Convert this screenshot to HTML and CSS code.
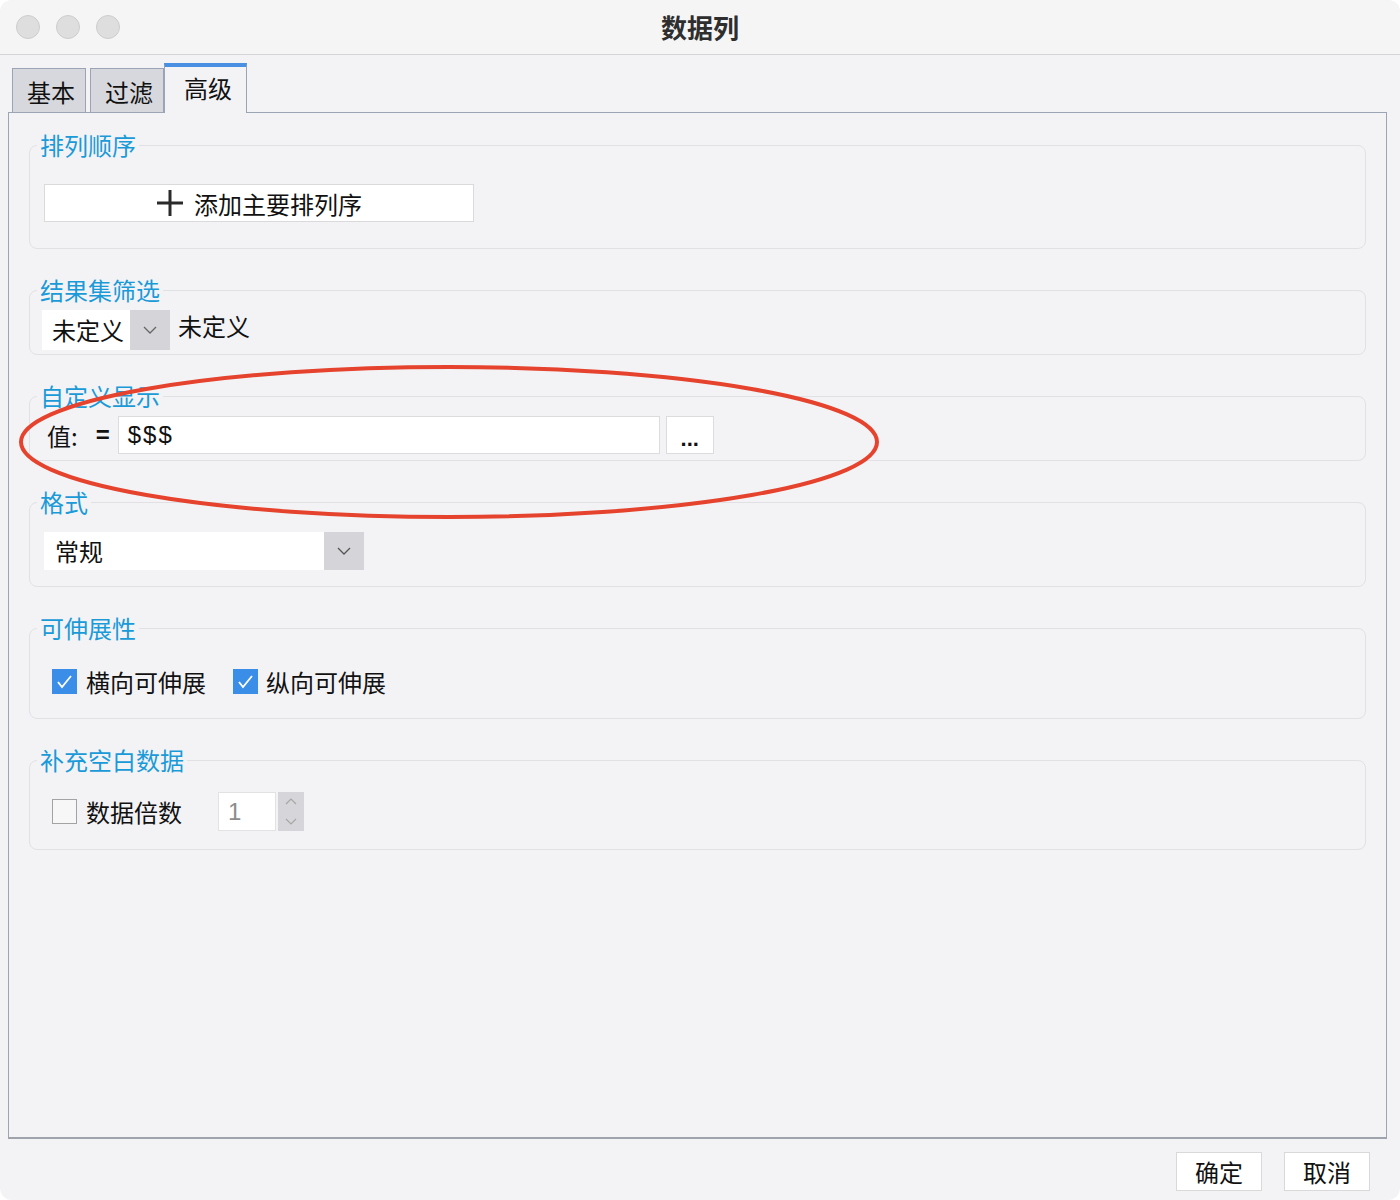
FILE: index.html
```html
<!DOCTYPE html>
<html lang="zh-CN">
<head>
    <meta charset="UTF-8">
    <title>数据列</title>
    <link rel="stylesheet" href="styles.css">
</head>
<body>
    <div class="window">
        <!-- 标题栏 -->
        <div class="titlebar">
            <div class="lights">
                <span class="light"></span>
                <span class="light"></span>
                <span class="light"></span>
            </div>
            <div class="title">数据列</div>
            <div></div>
        </div>

        <!-- 标签页 -->
        <div class="tabs">
            <div class="tab">基本</div>
            <div class="tab">过滤</div>
            <div class="tab active">高级</div>
        </div>

        <div class="panel">
            <fieldset class="group g-sort">
                <legend>排列顺序</legend>
                <button class="add-btn">
                    <svg width="28" height="28" viewBox="0 0 28 28"><path d="M14 1v26M1 14h26" stroke="#2a2a2a" stroke-width="3"/></svg>
                    添加主要排列序
                </button>
            </fieldset>

            <fieldset class="group g-filter">
                <legend>结果集筛选</legend>
                <div class="row top">
                    <div class="combo">
                        <span class="combo-text">未定义</span>
                        <span class="combo-arrow">
                            <svg width="14" height="8" viewBox="0 0 14 8"><path d="M1 1l6 6 6-6" fill="none" stroke="#666" stroke-width="1.3"/></svg>
                        </span>
                    </div>
                    <span class="after-combo">未定义</span>
                </div>
            </fieldset>

            <fieldset class="group g-custom">
                <legend>自定义显示</legend>
                <div class="row">
                    <span class="v-label">值:</span>
                    <span class="eq">=</span>
                    <div class="value-input">$$$</div>
                    <button class="dots-btn">...</button>
                </div>
            </fieldset>

            <fieldset class="group g-format">
                <legend>格式</legend>
                <div class="select">
                    <span class="select-text">常规</span>
                    <span class="combo-arrow">
                        <svg width="14" height="8" viewBox="0 0 14 8"><path d="M1 1l6 6 6-6" fill="none" stroke="#555" stroke-width="1.3"/></svg>
                    </span>
                </div>
            </fieldset>

            <fieldset class="group g-grow">
                <legend>可伸展性</legend>
                <div class="row checks">
                    <span class="cb checked">
                        <svg width="25" height="25" viewBox="0 0 25 25"><path d="M6 13l4 5 9-11" fill="none" stroke="#fff" stroke-width="1.8"/></svg>
                    </span>
                    <span class="cb-label">横向可伸展</span>
                    <span class="cb checked second">
                        <svg width="25" height="25" viewBox="0 0 25 25"><path d="M6 13l4 5 9-11" fill="none" stroke="#fff" stroke-width="1.8"/></svg>
                    </span>
                    <span class="cb-label second">纵向可伸展</span>
                </div>
            </fieldset>

            <fieldset class="group g-fill">
                <legend>补充空白数据</legend>
                <div class="row">
                    <span class="cb empty"></span>
                    <span class="cb-label fill">数据倍数</span>
                    <div class="spin-input">1</div>
                    <div class="spin-btns">
                        <svg width="12" height="7" viewBox="0 0 12 7"><path d="M1 6l5-5 5 5" fill="none" stroke="#a6a6a6" stroke-width="1.2"/></svg>
                        <svg width="12" height="7" viewBox="0 0 12 7"><path d="M1 1l5 5 5-5" fill="none" stroke="#a6a6a6" stroke-width="1.2"/></svg>
                    </div>
                </div>
            </fieldset>
        </div>

        <div class="footer">
            <button class="btn">确定</button>
            <button class="btn">取消</button>
        </div>

        <!-- 红色圈注 -->
        <svg class="mark" width="1400" height="1200" viewBox="0 0 1400 1200">
            <ellipse cx="449" cy="442" rx="428" ry="75" fill="none" stroke="#e5432d" stroke-width="4"/>
        </svg>
    </div>
</body>
</html>
```

FILE: styles.css
```css
body {
    margin: 0;
    background: #fff;
    font-family: "Noto Sans CJK SC", "Liberation Sans", sans-serif;
    color: #111;
}
.window {
    position: relative;
    width: 1400px;
    height: 1200px;
    border-radius: 12px;
    overflow: hidden;
    background: #f3f3f6;
    display: flex;
    flex-direction: column;
}

/* 标题栏 */
.titlebar {
    height: 55px;
    box-sizing: border-box;
    background: #f5f5f6;
    border-bottom: 1px solid #d4d4d6;
    display: grid;
    grid-template-columns: 1fr auto 1fr;
    align-items: center;
}
.lights {
    display: flex;
    gap: 16px;
    padding-left: 16px;
}
.light {
    width: 22px;
    height: 22px;
    border-radius: 50%;
    background: #dedede;
    border: 1px solid #cdcdcd;
}
.title {
    font-size: 26px;
    font-weight: bold;
    color: #2e2e2e;
    line-height: 30px;
}

/* 标签页 */
.tabs {
    display: flex;
    align-items: flex-end;
    padding: 8px 0 0 12px;
}
.tab {
    width: 74px;
    height: 44px;
    box-sizing: border-box;
    background: #d7d8dd;
    border: 1px solid #9aa4b4;
    border-bottom: none;
    font-size: 24px;
    line-height: 30px;
    padding: 8px 0 0 4px;
    text-align: center;
}
.tab + .tab {
    margin-left: 4px;
}
.tab.active {
    position: relative;
    z-index: 1;
    width: 83px;
    height: 50px;
    margin-left: 0;
    margin-bottom: -1px;
    background: #f3f3f6;
    border-top: 4px solid #4a90e2;
    padding: 6px 0 0 5px;
}

/* 面板 */
.panel {
    height: 1027px;
    box-sizing: border-box;
    margin: 0 13px 0 8px;
    border: 1px solid #9ca5b4;
    border-bottom: 2px solid #9ea3ac;
    padding: 17px 20px 0;
}
.group {
    margin: 0 0 26px;
    padding: 0 14px;
    min-width: 0;
    border: 1px solid #e1e1e5;
    border-radius: 8px;
}
.group legend {
    font-size: 24px;
    line-height: 30px;
    color: #1b9ad8;
    padding: 0 3px;
    margin-left: -7px;
}
.g-sort { padding-top: 24px; padding-bottom: 26px; }
.g-filter { padding-top: 5px; padding-bottom: 4px; }
.g-custom { padding-top: 5px; padding-bottom: 6px; }
.g-format { padding-top: 15px; padding-bottom: 16px; }
.g-grow { padding-top: 19px; padding-bottom: 18px; }
.g-fill { padding-top: 17px; padding-bottom: 18px; }

.row {
    display: flex;
    align-items: center;
    font-size: 24px;
}
.row.top {
    align-items: flex-start;
}

.add-btn {
    width: 430px;
    height: 38px;
    padding: 0;
    background: #fff;
    border: 1px solid #dadadd;
    font-family: inherit;
    font-size: 24px;
    color: #111;
    display: flex;
    align-items: center;
    justify-content: center;
    gap: 10px;
}

.combo, .select {
    display: flex;
    background: #fff;
    font-size: 24px;
}
.combo {
    height: 40px;
    margin-left: -2px;
    line-height: 40px;
}
.combo-text {
    width: 88px;
    box-sizing: border-box;
    padding-left: 10px;
}
.combo-arrow {
    width: 40px;
    background: #d5d5d9;
    display: flex;
    align-items: center;
    justify-content: center;
}
.after-combo {
    margin-left: 8px;
    line-height: 32px;
}

.v-label {
    margin-left: 3px;
}
.eq {
    margin-left: 18px;
    font-family: "Liberation Sans", sans-serif;
    font-weight: bold;
}
.value-input {
    width: 542px;
    height: 38px;
    box-sizing: border-box;
    margin-left: 8px;
    padding-left: 9px;
    background: #fff;
    border: 1px solid #dcdcdf;
    font-family: "Liberation Sans", sans-serif;
    line-height: 36px;
    letter-spacing: 2px;
}
.dots-btn {
    width: 48px;
    height: 38px;
    margin-left: 6px;
    padding: 8px 0 0;
    background: #fff;
    border: 1px solid #dcdcdf;
    font-family: "Liberation Sans", sans-serif;
    font-size: 22px;
    font-weight: bold;
    color: #111;
}

.select {
    width: 320px;
    height: 38px;
    line-height: 38px;
}
.select-text {
    width: 280px;
    box-sizing: border-box;
    padding-left: 11px;
}

.checks {
    height: 38px;
}
.cb {
    box-sizing: border-box;
    margin-left: 8px;
}
.cb.checked {
    width: 25px;
    height: 25px;
    background: #3a8ee8;
}
.cb.checked svg {
    display: block;
}
.cb.checked.second {
    margin-left: 27px;
}
.cb-label {
    margin-left: 9px;
}
.cb-label.second {
    margin-left: 8px;
}
.cb.empty {
    width: 25px;
    height: 25px;
    background: #f7f7f8;
    border: 1.5px solid #a3a3a3;
}
.cb-label.fill {
    margin-left: 9px;
}
.spin-input {
    width: 58px;
    height: 39px;
    box-sizing: border-box;
    margin-left: 36px;
    padding-left: 9px;
    background: #fff;
    border: 1px solid #e2e2e4;
    color: #8c8c8c;
    font-family: "Liberation Sans", sans-serif;
    line-height: 37px;
}
.spin-btns {
    width: 26px;
    height: 39px;
    margin-left: 2px;
    background: #d6d6da;
    display: flex;
    flex-direction: column;
    align-items: center;
    justify-content: space-around;
}

/* 底部按钮 */
.footer {
    display: flex;
    justify-content: flex-end;
    gap: 22px;
    padding: 13px 30px 0 0;
}
.btn {
    width: 86px;
    height: 39px;
    padding: 0;
    background: #fff;
    border: 1px solid #d9d9d9;
    font-family: inherit;
    font-size: 24px;
    color: #111;
}

.mark {
    position: absolute;
    top: 0;
    left: 0;
    pointer-events: none;
}
```
